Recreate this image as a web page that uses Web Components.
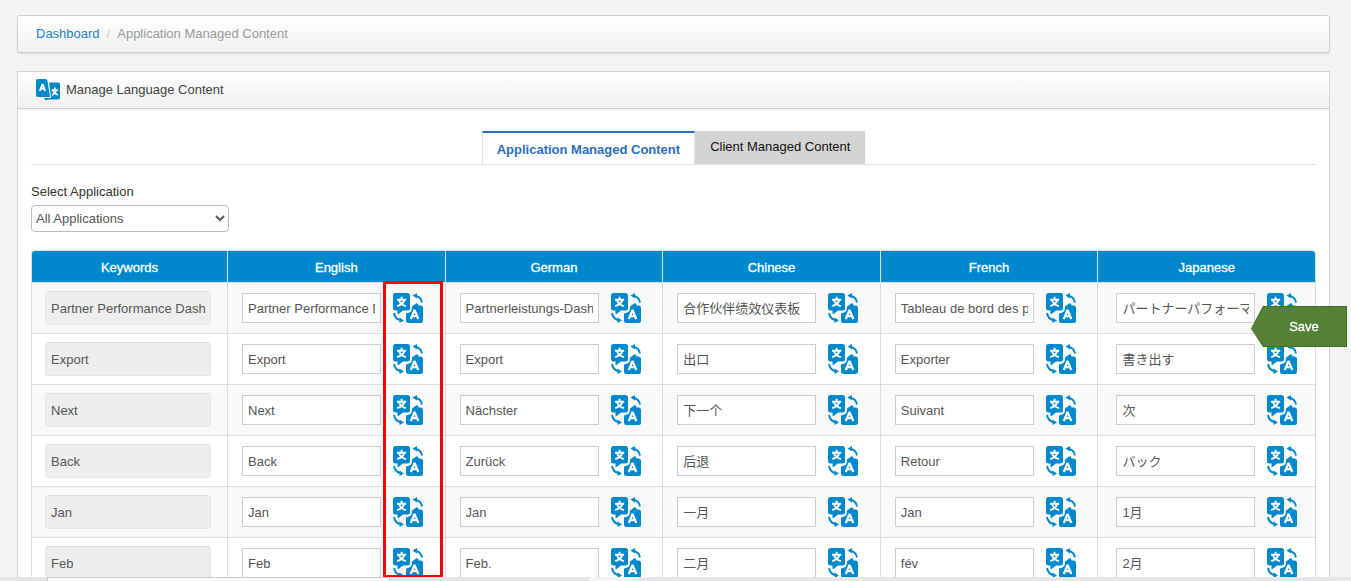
<!DOCTYPE html>
<html lang="en">
<head>
<meta charset="utf-8">
<title>Manage Language Content</title>
<style>
  html, body { height: 100%; }
  body {
    margin: 0;
    overflow: hidden;
    background: #f4f4f4;
    color: #444;
    font: 13px/20px "Liberation Sans", Arial, "Noto Sans CJK SC", sans-serif;
  }
</style>
</head>
<body>
<language-page></language-page>
<script>
const base = '<style>*,*::before{box-sizing:border-box}</style>';

function define(name, html, setup) {
  customElements.define(name, class extends HTMLElement {
    constructor() {
      super();
      this.attachShadow({ mode: 'open' }).innerHTML = base + html;
    }
    connectedCallback() {
      if (setup && !this.ready) { this.ready = true; setup(this, this.shadowRoot); }
    }
  });
}

define('translate-icon', `
  <style>:host{display:block;width:30px;height:30px} svg{display:block;width:100%;height:100%}</style>
  <svg viewBox="0 0 30 30" aria-hidden="true">
    <path fill="#0088cc" d="M2.500 0H14.500Q17 0 17 2.500V15Q17 17.500 14.500 17.500H10L5.500 21Q4.500 21.500 4.500 20V17.500H2.500Q0 17.500 0 15V2.500Q0 0 2.500 0Z"/>
    <path fill="none" stroke="#fff" stroke-width="1.900" d="M8.600 3.800V6M4 6.700H13.200M5.800 7Q7.500 11.500 13 13.200M11.500 7Q9.500 11.500 4.200 13.200"/>
    <path fill="#0088cc" d="M19 13.500 23.500 10.200Q25.500 10 25.500 12.500H27.500Q30 12.500 30 15V27.500Q30 30 27.500 30H15.500Q13 30 13 27.500V20.500Q16 20 18 18.500Q19 17 19 13.500Z"/>
    <path fill="none" stroke="#fff" stroke-width="2.200" stroke-linejoin="bevel" d="M17.800 26 21.500 17 25.300 26M19 23.200H24"/>
    <path fill="none" stroke="#0088cc" stroke-width="1.900" d="M21.500 2.800Q28 3.500 29 9.500M1 20Q2 26.500 8.500 27.300"/>
    <path fill="#0088cc" d="M19.500 2.500 24 0V5.500ZM11 27.500 6.500 24.500V30Z"/>
  </svg>`);

define('language-logo', `
  <style>:host{display:block;width:24px;height:22px} svg{display:block;width:100%;height:100%}</style>
  <svg viewBox="0 0 24 22" aria-hidden="true">
    <path fill="#0088cc" d="M2 0H9.500Q11 0 11.500 2L14 18H2Q0 18 0 16V2Q0 0 2 0ZM13 3.500H22Q24 3.500 24 5.500V18.500Q24 20.500 22 20.500H12L9.500 21.500 8 19H15.200Z"/>
    <path fill="none" stroke="#fff" stroke-width="1.900" stroke-linejoin="bevel" d="M3.800 12 6.500 5 9.200 12M4.500 9.800H8.500"/>
    <path fill="none" stroke="#fff" stroke-width="1.600" d="M18.800 8.500V10.500M15.500 11H22.200M16.800 11Q18 14.500 21.800 16M20.800 11Q19.500 14.500 16 16"/>
  </svg>`);

define('bread-crumb', `
  <style>
    :host{display:block;border:1px solid #cfcfcf;border-radius:3px;background:linear-gradient(#fff,#f1f1f1);box-shadow:0 1px 2px #ddd}
    ol{display:flex;margin:0;padding:8px 18px;list-style:none;color:#999}
    a{color:#1c83c6;text-decoration:none}
    li+li::before{content:"/";color:#ccc;padding:0 7px}
  </style>
  <nav aria-label="Breadcrumb"><ol><li><a href="#">Dashboard</a></li><li>Application Managed Content</li></ol></nav>`);

define('content-panel', `
  <style>
    :host{display:block;border:1px solid #cfcfcf;background:#fff}
    header{display:flex;align-items:center;gap:6px;height:37px;padding:0 18px;border-bottom:1px solid #cfcfcf;background:linear-gradient(#fff,#f0f0f0);box-shadow:0 1px 2px #eee}
    h1{margin:0;font-size:13px;font-weight:400}
    div{padding:22px 13px}
  </style>
  <header><language-logo></language-logo><h1><slot name="title"></slot></h1></header>
  <div><slot></slot></div>`);

define('content-tabs', `
  <style>
    :host{display:flex;justify-content:center;border-bottom:1px solid #dee2e6}
    button{height:33px;margin:0;border:0;font:inherit;cursor:pointer}
    .on{padding:2px 14px 0;border:solid #dee2e6;border-width:2px 1px 0;border-top-color:#2a6fbb;background:#fff;color:#2a6fbb;font-weight:700}
    .off{padding:0 15px 2px;background:#d4d4d4;color:#111}
  </style>
  <button class="on">Application Managed Content</button><button class="off">Client Managed Content</button>`);

define('application-picker', `
  <style>
    :host{display:block;padding:17px 0 18px}
    label{display:block;margin-bottom:3px;color:#333}
    select{display:block;width:198px;height:27px;padding:0;border:1px solid #bbb;border-radius:4px;background:#fff;color:#555;font:inherit}
  </style>
  <label for="app">Select Application</label>
  <select id="app"><option>All Applications</option></select>`);

define('keyword-field', `
  <style>
    :host{display:block}
    input{display:block;width:166px;height:34px;padding:0 4px 0 5px;border:1px solid #e6e6e6;border-top-color:#ddd;border-radius:4px;background:#eee;color:#555;font:inherit}
  </style><input readonly aria-label="Keyword">`,
  (el, root) => { root.querySelector('input').value = el.getAttribute('value'); });

define('translation-field', `
  <style>
    :host{display:flex;align-items:center;gap:12px}
    input{width:139px;height:30px;padding:0 5px;border:1px solid #ccc;border-radius:0;background:#fff;color:#555;font:inherit}
    :host(:lang(zh)) input,:host(:lang(ja)) input{padding-bottom:2px}
    button{padding:0;border:0;background:none;cursor:pointer}
  </style><input><button aria-label="Translate"><translate-icon></translate-icon></button>`,
  (el, root) => {
    const input = root.querySelector('input');
    input.value = el.getAttribute('value');
    input.setAttribute('aria-label', el.getAttribute('label'));
  });

const languages = ['English', 'German', 'Chinese', 'French', 'Japanese'];
const codes = ['en', 'de', 'zh', 'fr', 'ja'];
const rows = [
  ['Partner Performance Dashboard', 'Partner Performance Dashboard', 'Partnerleistungs-Dashboard', '合作伙伴绩效仪表板', 'Tableau de bord des performances', 'パートナーパフォーマンス'],
  ['Export', 'Export', 'Export', '出口', 'Exporter', '書き出す'],
  ['Next', 'Next', 'Nächster', '下一个', 'Suivant', '次'],
  ['Back', 'Back', 'Zurück', '后退', 'Retour', 'バック'],
  ['Jan', 'Jan', 'Jan', '一月', 'Jan', '1月'],
  ['Feb', 'Feb', 'Feb.', '二月', 'fév', '2月']
];

define('translation-table', `
  <style>
    :host{display:block;position:relative}
    table{width:100%;table-layout:fixed;border:1px solid #ddd;border-radius:4px 4px 0 0;border-spacing:0;overflow:hidden}
    th{height:31px;padding:2px 0 0;background:#0088cc;color:#fff;font-size:13px;font-weight:400;-webkit-text-stroke:.3px #fff}
    th:first-child{width:195px}
    th+th,td+td{border-left:1px solid #ddd}
    td{height:51px;padding:0 0 0 14px;border-top:1px solid #ddd}
    td:first-child{padding-left:13px}
    td:last-child{padding-left:18px}
    tbody tr:nth-child(odd){background:#f9f9f9}
    .mark{position:absolute;left:352px;top:31px;width:60px;height:297px;border:3px solid #f00;border-radius:2px;pointer-events:none}
  </style>
  <table><thead><tr></tr></thead><tbody></tbody></table><div class="mark"></div>`,
  (el, root) => {
    root.querySelector('thead tr').innerHTML = ['Keywords', ...languages].map(t => `<th scope="col">${t}</th>`).join('');
    root.querySelector('tbody').innerHTML = rows.map(([key, ...texts]) =>
      `<tr><td><keyword-field value="${key}"></keyword-field></td>` +
      texts.map((t, i) => `<td><translation-field label="${languages[i]}" lang="${codes[i]}" value="${t}"></translation-field></td>`).join('') + '</tr>').join('');
  });

define('save-flag', `
  <style>
    :host{position:fixed;right:4px;top:306px;width:96px;height:41px}
    button{width:100%;height:100%;padding:0 0 0 10px;border:0;background:#426e27;color:#fff;font:inherit;-webkit-text-stroke:.3px #fff;cursor:pointer;position:relative;clip-path:polygon(12px 0,100% 0,100% 100%,12px 100%,0 55%)}
    button::before{content:"";position:absolute;inset:1px;background:#548235;clip-path:polygon(12px 0,100% 0,100% 100%,12px 100%,0 55%)}
    span{position:relative}
  </style><button><span>Save</span></button>`);

define('window-edge', `
  <style>
    :host{position:fixed;left:0;right:0;bottom:0;height:4px;background:linear-gradient(90deg,#e4e4e4 589px,#f4f4f4 589px 638px,#e6e6e8 638px)}
    i{display:block;width:343px;height:4px;margin-left:47px;border:1px solid #c8c8c8;border-bottom:0;background:#fff}
  </style><i></i>`);

define('language-page', `
  <style>
    :host{display:block;padding:15px 21px 0 17px}
    content-panel{margin-top:18px}
  </style>
  <bread-crumb></bread-crumb>
  <content-panel>
    <span slot="title">Manage Language Content</span>
    <content-tabs></content-tabs>
    <application-picker></application-picker>
    <translation-table></translation-table>
  </content-panel>
  <save-flag></save-flag>
  <window-edge></window-edge>`);
</script>
</body>
</html>
